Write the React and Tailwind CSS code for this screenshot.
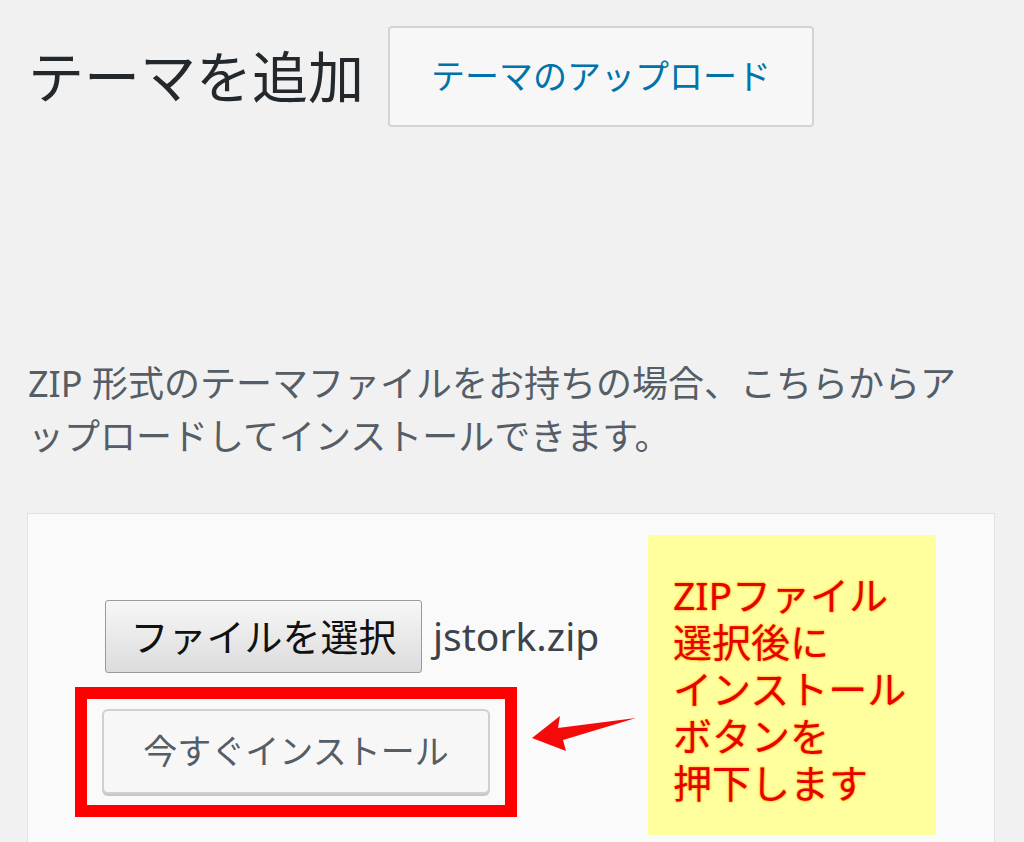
export default function App() {
  return (
    <div className="w-[1024px] h-[842px] overflow-hidden bg-[#f1f1f1] font-['Noto_Sans','Noto_Sans_CJK_JP',sans-serif]">
      <div className="flex items-center gap-[24px] pl-[28px] pt-[26px]">
        <h1 className="text-[56px] leading-[1.2] text-[#23282d] font-normal">テーマを追加</h1>
        <button className="h-[101px] w-[426px] rounded-[4px] border-2 border-[#d4d4d4] bg-[#f7f7f7] text-[34px] text-[#0073aa]">
          テーマのアップロード
        </button>
      </div>

      <p className="mt-[230px] pl-[28px] text-[36px] leading-[53px] text-[#555d66] whitespace-nowrap">
        ZIP 形式のテーマファイルをお持ちの場合、こちらからア
        <br />
        ップロードしてインストールできます。
      </p>

      <div className="relative mt-[50px] ml-[27px] w-[968px] h-[360px] border border-[#e2e2e2] bg-[#fafafa] pt-[86px]">
        <div className="flex items-center pl-[77px]">
          <button className="h-[73px] w-[317px] rounded-[3px] border border-[#9a9a9a] bg-gradient-to-b from-[#f7f7f7] to-[#dcdcdc] text-[38px] text-[#111]">
            ファイルを選択
          </button>
          <span className="ml-[11px] text-[39px] text-[#3c434a]">jstork.zip</span>
        </div>

        <div className="mt-[14px] ml-[47px] w-[442px] h-[130px] border-[12px] border-[#ff0000] pt-[10px] pl-[15px]">
          <button className="h-[85px] w-[388px] rounded-[6px] border-2 border-[#d0d0d0] bg-[#f7f7f7] shadow-[0_2px_0_#c8c8c8] text-[34px] text-[#555d66]">
            今すぐインストール
          </button>
        </div>

        <svg className="absolute left-[497px] top-[193px]" width="120" height="50" viewBox="0 0 120 50">
          <polygon points="7,31 35,9 33,21 111,11 38,33 41,44" fill="#f50a0a" />
        </svg>

        <div className="absolute left-[620px] top-[21px] w-[288px] h-[300px] bg-[#ffff9e] pl-[25px] pt-[36px] text-[39px] leading-[47px] text-[#e60000] [text-shadow:0_0_3px_#ffa800,0_0_1px_#ffa800]">
          <div className="h-[47px]">ZIPファイル</div>
          <div className="h-[47px]">選択後に</div>
          <div className="h-[47px]">インストール</div>
          <div className="h-[47px]">ボタンを</div>
          <div className="h-[47px]">押下します</div>
        </div>
      </div>
    </div>
  );
}
